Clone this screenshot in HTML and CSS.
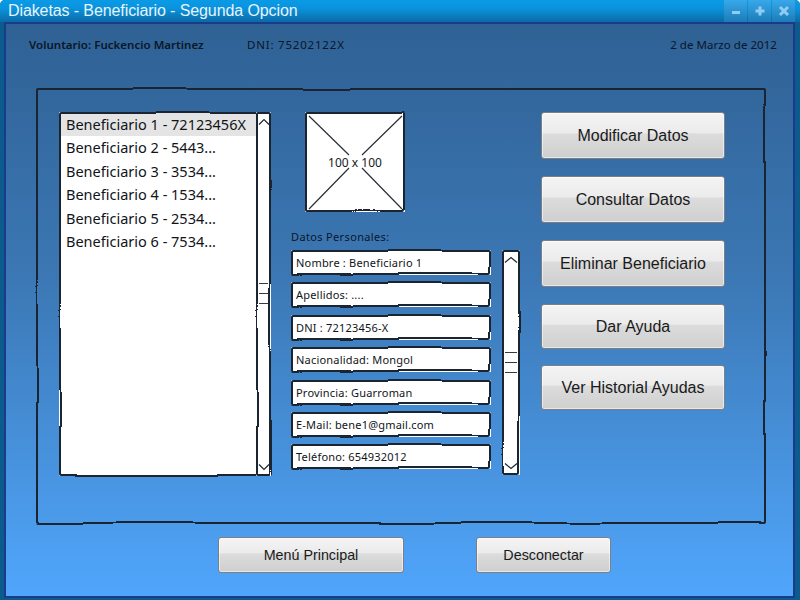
FILE: index.html
```html
<!DOCTYPE html>
<html lang="es">
<head>
<meta charset="utf-8">
<title>Diaketas - Beneficiario - Segunda Opcion</title>
<link rel="stylesheet" href="styles.css">
</head>
<body>
<svg class="defs" width="0" height="0" aria-hidden="true">
  <filter id="wobble" x="-2%" y="-10%" width="104%" height="120%" color-interpolation-filters="sRGB">
    <feTurbulence type="fractalNoise" baseFrequency="0.012" numOctaves="1" seed="7"/>
    <feColorMatrix type="matrix" values="1 0 0 0 0  0 1 0 0 0  0 0 1 0 0  0 0 0 0 1"/>
    <feDisplacementMap in="SourceGraphic" scale="5" xChannelSelector="R" yChannelSelector="G"/>
    <feGaussianBlur stdDeviation="0.4"/>
  </filter>
</svg>
<div class="window">
  <header class="titlebar">
    <span class="title">Diaketas - Beneficiario - Segunda Opcion</span>
    <div class="controls">
      <span class="ctl"><svg width="12" height="12" viewBox="0 0 12 12"><path d="M2 7.5h8" class="glyph"/></svg></span>
      <span class="ctl"><svg width="12" height="12" viewBox="0 0 12 12"><path d="M1.5 6h9M6 1.5v9" class="glyph"/></svg></span>
      <span class="ctl"><svg width="12" height="12" viewBox="0 0 12 12"><path d="M2 2l8 8M10 2l-8 8" class="glyph"/></svg></span>
    </div>
  </header>
  <div class="client">
    <div class="info">
      <span class="vol">Voluntario: Fuckencio Martinez</span>
      <span class="dni">DNI: 75202122X</span>
      <span class="date">2 de Marzo de 2012</span>
    </div>
    <main class="panel sketch">
      <div class="listbox sketch">
        <ul class="list">
          <li class="selected">Beneficiario 1 - 72123456X</li>
          <li>Beneficiario 2 - 5443...</li>
          <li>Beneficiario 3 - 3534...</li>
          <li>Beneficiario 4 - 1534...</li>
          <li>Beneficiario 5 - 2534...</li>
          <li>Beneficiario 6 - 7534...</li>
        </ul>
        <div class="scroll scroll-list sketch">
          <svg class="arrow" width="12" height="8" viewBox="0 0 12 8"><path d="M1 6.5L6 1.5l5 5"/></svg>
          <div class="thumb thumb-list"><i></i><i></i><i></i></div>
          <svg class="arrow" width="12" height="8" viewBox="0 0 12 8"><path d="M1 1.5l5 5 5-5"/></svg>
        </div>
      </div>
      <section class="middle">
        <div class="placeholder sketch">
          <svg class="cross" width="100" height="100" viewBox="0 0 100 100"><path d="M4 4L44 43M57 56L97 97M97 4L57 43M44 56L4 97"/></svg>
          <span class="ph-label">100 x 100</span>
        </div>
        <div class="data-label">Datos Personales:</div>
        <div class="data-row">
          <div class="fields">
            <div class="field sketch">Nombre : Beneficiario 1</div>
            <div class="field sketch">Apellidos: ....</div>
            <div class="field sketch">DNI : 72123456-X</div>
            <div class="field sketch">Nacionalidad: Mongol</div>
            <div class="field sketch">Provincia: Guarroman</div>
            <div class="field sketch">E-Mail: bene1@gmail.com</div>
            <div class="field sketch">Teléfono: 654932012</div>
          </div>
          <div class="scroll scroll-data sketch">
            <svg class="arrow" width="14" height="8" viewBox="0 0 14 8"><path d="M1 6.5L7 1.5l6 5"/></svg>
            <div class="thumb thumb-data"><i></i><i></i><i></i></div>
            <svg class="arrow" width="14" height="8" viewBox="0 0 14 8"><path d="M1 1.5l6 5 6-5"/></svg>
          </div>
        </div>
      </section>
      <nav class="actions">
        <button class="btn action">Modificar Datos</button>
        <button class="btn action">Consultar Datos</button>
        <button class="btn action">Eliminar Beneficiario</button>
        <button class="btn action short">Dar Ayuda</button>
        <button class="btn action short last">Ver Historial Ayudas</button>
      </nav>
    </main>
    <footer class="footer">
      <button class="btn foot-main">Menú Principal</button>
      <button class="btn foot-exit">Desconectar</button>
    </footer>
  </div>
</div>
</body>
</html>
```
FILE: styles.css
```css
* { box-sizing: border-box; }
html, body { margin: 0; padding: 0; }
body { width: 800px; height: 600px; overflow: hidden; background: #fff; }
.defs { position: absolute; }
.window {
  width: 800px; height: 600px;
  display: flex; flex-direction: column;
  background: #0b5c8c;
  border-radius: 5px 5px 0 0;
  overflow: hidden;
}
.titlebar {
  height: 22px; flex: none;
  display: flex; align-items: center; justify-content: space-between;
  padding: 0 5px 0 8px;
  background: linear-gradient(#0a9be6, #0a92dc 40%, #0b6aa6);
}
.title {
  font: 16px/22px "Liberation Sans", Arial, sans-serif;
  letter-spacing: -0.1px;
  color: #e6f4fd;
}
.controls { display: flex; gap: 1px; height: 22px; }
.ctl {
  width: 23px; height: 22px;
  display: flex; align-items: center; justify-content: center;
  background: linear-gradient(#38a8ea, #1c7cb8);
}
.glyph { fill: none; stroke: #8fcdf2; stroke-width: 3; }
.client {
  flex: none;
  width: 791px; height: 576px;
  margin-left: 4px;
  border: 2px solid #1a3a8c;
  display: flex; flex-direction: column;
  background: linear-gradient(#2f6194, #3c78b5 45%, #50a6fc);
}
.info {
  height: 40px; flex: none;
  padding: 2px 16px 0 23px;
  display: flex; align-items: center;
  font: 11.5px/16px "Noto Sans", sans-serif;
  color: #0c1626;
}
.vol { font-weight: 600; width: 218px; white-space: nowrap; letter-spacing: 0.02px; }
.dni { flex: 1; letter-spacing: 0.8px; }
.date { letter-spacing: 0.05px; }
.sketch { position: relative; }
.sketch::before {
  content: "";
  position: absolute; inset: 0;
  border: 2px solid #1b2431;
  border-radius: 2px;
  filter: url(#wobble);
  pointer-events: none;
}
.panel {
  width: 730px; height: 436px; flex: none;
  margin: 24px 0 0 30px;
  padding: 24px 0 0 23px;
  display: flex; align-items: flex-start;
}
.listbox {
  width: 212px; height: 364px; flex: none;
  display: flex;
  background: #fff;
}
.list {
  flex: 1; margin: 0; padding: 1px 0 0 2px;
  list-style: none;
  font: 14.5px/23.4px "Noto Sans", sans-serif;
  color: #101418;
}
.list li { padding-left: 5px; height: 23.4px; white-space: nowrap; }
.list .selected { background: #e4e4e4; }
.scroll {
  flex: none; background: #fff;
  display: flex; flex-direction: column; align-items: center;
  justify-content: space-between;
  padding: 6px 0 5px;
}
.scroll-list { width: 15px; height: 364px; }
.scroll-data { width: 18px; height: 225px; margin-left: 11px; }
.arrow { fill: none; stroke: #20262e; stroke-width: 1.2; }
.thumb { display: flex; flex-direction: column; gap: 9px; align-items: center; margin-top: -2px; }
.thumb i { display: block; height: 1px; background: #333a42; width: 100%; }
.thumb-list { width: 9px; }
.thumb-data { width: 12px; }
.middle { flex: none; width: 229px; margin-left: 20px; display: flex; flex-direction: column; }
.placeholder {
  width: 100px; height: 100px; margin-left: 14px;
  background: #fff;
  padding-top: 2px;
  display: flex; align-items: center; justify-content: center;
}
.cross { position: absolute; left: 0; top: 0; fill: none; stroke: #2a3036; stroke-width: 1.2; }
.ph-label { font: 12px/16px "Noto Sans", sans-serif; color: #15191e; }
.data-label {
  height: 17px; margin-top: 16px; margin-bottom: 5px;
  font: 11px/17px "Noto Sans", sans-serif;
  letter-spacing: 0.35px;
  color: #0c1626;
}
.data-row { display: flex; align-items: flex-start; }
.fields { width: 200px; flex: none; display: flex; flex-direction: column; gap: 7.4px; }
.field {
  height: 25px; background: #fff;
  padding-left: 5px;
  font: 11px/25px "Noto Sans", sans-serif;
  letter-spacing: 0.2px;
  color: #101418;
  white-space: nowrap;
}
.actions { flex: none; width: 184px; margin-left: 21px; display: flex; flex-direction: column; gap: 17px; }
.btn {
  display: block; padding: 0;
  font: 16px/20px "Liberation Sans", Arial, sans-serif;
  color: #1a1a1a;
  border: 1px solid #7c7f84;
  border-radius: 3px;
  background: linear-gradient(#f4f4f4, #ebebeb 45%, #dcdcdc 46%, #cfcfcf);
  box-shadow: inset 0 0 0 1px rgba(255,255,255,.5);
}
.action { width: 184px; height: 47px; }
.short { height: 45px; }
.last { margin-top: -1px; }
.footer { display: flex; align-items: flex-start; margin-top: 13px; padding-left: 212px; }
.foot-main, .foot-exit { height: 36px; font-size: 14.3px; }
.foot-main { width: 186px; }
.foot-exit { width: 135px; margin-left: 72px; }
```
